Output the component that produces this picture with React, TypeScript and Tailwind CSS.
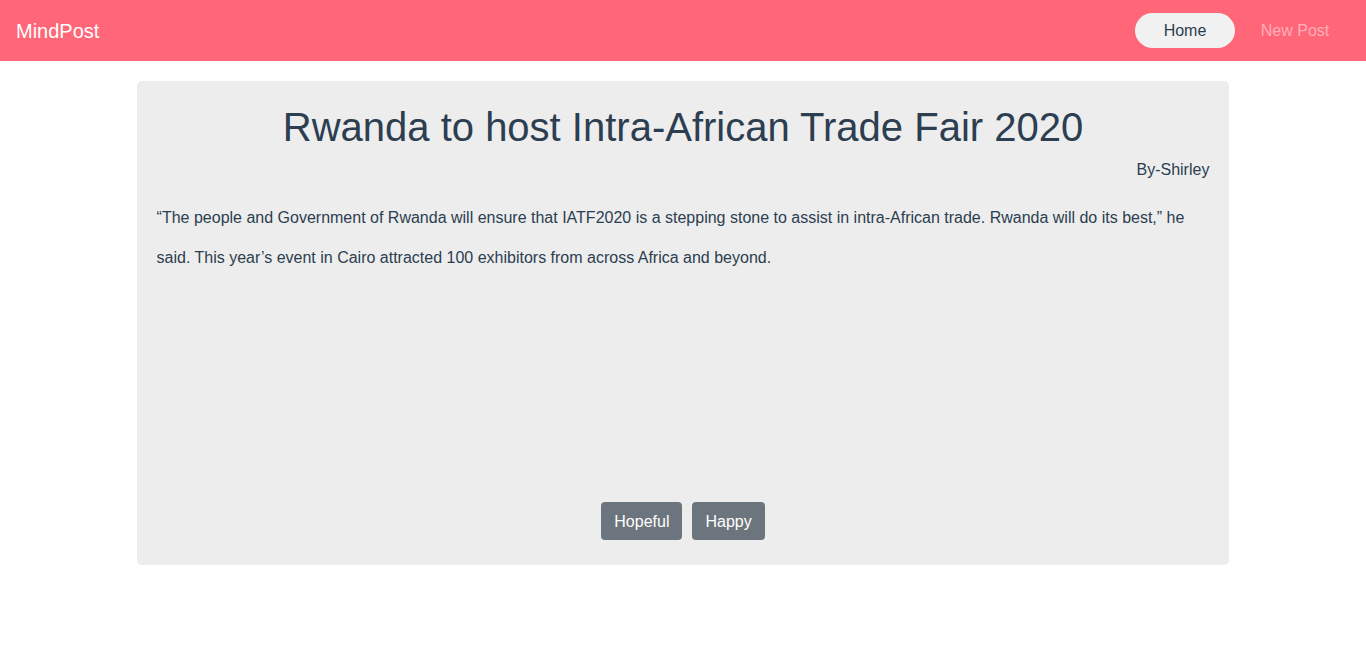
const post = {
  title: "Rwanda to host Intra-African Trade Fair 2020",
  author: "Shirley",
  body: "“The people and Government of Rwanda will ensure that IATF2020 is a stepping stone to assist in intra-African trade. Rwanda will do its best,” he said. This year’s event in Cairo attracted 100 exhibitors from across Africa and beyond.",
  moods: ["Hopeful", "Happy"],
};

export default function App() {
  return (
    <div className="min-h-screen bg-white font-['Liberation_Sans',Arial,sans-serif] text-[#2c3e50]">
      <nav className="flex h-[61px] items-center justify-between bg-[#ff6678] pl-4 pr-[21px]">
        <span className="text-[20px] text-white">MindPost</span>
        <div className="flex gap-[10px]">
          <a className="flex h-[35px] w-[100px] items-center justify-center rounded-full bg-[#f1f1f1] pt-px text-[16px] text-[#2c3e50]">
            Home
          </a>
          <a className="flex h-[35px] w-[100px] items-center justify-center pt-px text-[16px] text-[#ffb0ba]">
            New Post
          </a>
        </div>
      </nav>

      <article className="mx-auto mt-5 flex h-[484px] w-4/5 flex-col rounded-[5px] bg-[#ededed] px-5 pt-[23px] pb-[25px]">
        <h1 className="text-center text-[40px] leading-[46px]">{post.title}</h1>
        <p className="mt-[11px] text-right text-[16px] leading-[18px]">By-{post.author}</p>
        <p className="mt-[19px] text-[16px] leading-[40px]">{post.body}</p>
        <div className="mt-auto flex justify-center gap-[10px]">
          {post.moods.map((m) => (
            <button
              key={m}
              className="h-[38px] rounded-[4px] bg-[#6c757d] px-[13px] pt-px text-[16px] text-white"
            >
              {m}
            </button>
          ))}
        </div>
      </article>
    </div>
  );
}
